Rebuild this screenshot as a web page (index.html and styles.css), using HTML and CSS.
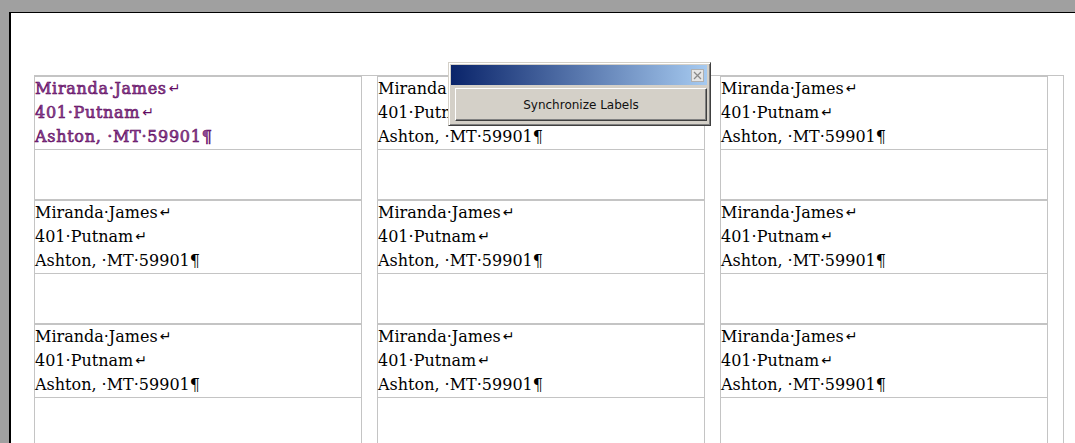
FILE: index.html
```html
<!DOCTYPE html>
<html lang="en">
<head>
<meta charset="utf-8">
<title>Labels</title>
<link rel="stylesheet" href="styles.css">
</head>
<body>
<div class="page">
  <div class="table">
    <div class="row">
      <div class="label">
        <div class="text fancy">
          <div class="line">Miranda·James<span class="ret">↵</span></div>
          <div class="line">401·Putnam<span class="ret">↵</span></div>
          <div class="line">Ashton, ·MT·59901¶</div>
        </div>
        <div class="empty"></div>
      </div>
      <div class="gap"></div>
      <div class="label">
        <div class="text">
          <div class="line">Miranda·James<span class="ret">↵</span></div>
          <div class="line">401·Putnam<span class="ret">↵</span></div>
          <div class="line">Ashton, ·MT·59901¶</div>
        </div>
        <div class="empty"></div>
      </div>
      <div class="gap"></div>
      <div class="label">
        <div class="text">
          <div class="line">Miranda·James<span class="ret">↵</span></div>
          <div class="line">401·Putnam<span class="ret">↵</span></div>
          <div class="line">Ashton, ·MT·59901¶</div>
        </div>
        <div class="empty"></div>
      </div>
      <div class="gap last"></div>
    </div>
    <div class="row">
      <div class="label">
        <div class="text">
          <div class="line">Miranda·James<span class="ret">↵</span></div>
          <div class="line">401·Putnam<span class="ret">↵</span></div>
          <div class="line">Ashton, ·MT·59901¶</div>
        </div>
        <div class="empty"></div>
      </div>
      <div class="gap"></div>
      <div class="label">
        <div class="text">
          <div class="line">Miranda·James<span class="ret">↵</span></div>
          <div class="line">401·Putnam<span class="ret">↵</span></div>
          <div class="line">Ashton, ·MT·59901¶</div>
        </div>
        <div class="empty"></div>
      </div>
      <div class="gap"></div>
      <div class="label">
        <div class="text">
          <div class="line">Miranda·James<span class="ret">↵</span></div>
          <div class="line">401·Putnam<span class="ret">↵</span></div>
          <div class="line">Ashton, ·MT·59901¶</div>
        </div>
        <div class="empty"></div>
      </div>
      <div class="gap last"></div>
    </div>
    <div class="row">
      <div class="label">
        <div class="text">
          <div class="line">Miranda·James<span class="ret">↵</span></div>
          <div class="line">401·Putnam<span class="ret">↵</span></div>
          <div class="line">Ashton, ·MT·59901¶</div>
        </div>
        <div class="empty"></div>
      </div>
      <div class="gap"></div>
      <div class="label">
        <div class="text">
          <div class="line">Miranda·James<span class="ret">↵</span></div>
          <div class="line">401·Putnam<span class="ret">↵</span></div>
          <div class="line">Ashton, ·MT·59901¶</div>
        </div>
        <div class="empty"></div>
      </div>
      <div class="gap"></div>
      <div class="label">
        <div class="text">
          <div class="line">Miranda·James<span class="ret">↵</span></div>
          <div class="line">401·Putnam<span class="ret">↵</span></div>
          <div class="line">Ashton, ·MT·59901¶</div>
        </div>
        <div class="empty"></div>
      </div>
      <div class="gap last"></div>
    </div>
  </div>
</div>

<div class="toolbar">
  <div class="titlebar">
    <div class="close">
      <svg width="9" height="9" viewBox="0 0 9 9"><path d="M1 1 L8 8 M8 1 L1 8" stroke="#8a8a8a" stroke-width="1.3" fill="none"/></svg>
    </div>
  </div>
  <div class="btn">Synchronize Labels</div>
</div>
</body>
</html>
```
FILE: styles.css
```css
html, body {
  margin: 0;
  padding: 0;
}
body {
  background: #a0a0a0;
  width: 1075px;
  height: 443px;
  overflow: hidden;
  position: relative;
  padding-top: 12px;
  box-sizing: border-box;
}
.page {
  margin-left: 9px;
  width: 1055px;
  height: 460px;
  background: #fff;
  border-left: 2px solid #000;
  border-top: 1px solid #000;
  box-shadow: 4px 1px 0 #000;
  padding-top: 62px;
  padding-left: 23px;
  box-sizing: content-box;
}
.table {
  width: 1030px;
  border-top: 1px solid #c4c4c4;
}
.row {
  display: flex;
}
.label {
  width: 328px;
  box-sizing: border-box;
  border: 1px solid #c4c4c4;
  display: flex;
  flex-direction: column;
}
.gap {
  width: 15px;
}
.gap.last {
  width: 16px;
  box-sizing: border-box;
  border-right: 1px solid #c4c4c4;
}
.text {
  height: 72px;
  border-bottom: 1px solid #c4c4c4;
  font-family: "DejaVu Serif", serif;
  font-size: 16px;
  line-height: 24px;
  color: #000;
  white-space: nowrap;
}
.line {
  height: 24px;
}
.empty {
  height: 49px;
}
.ret {
  font-family: "DejaVu Sans", sans-serif;
  font-size: 14px;
  line-height: 0;
  margin-left: 2px;
  vertical-align: 1px;
}
.fancy {
  color: #8e4a94;
  -webkit-text-stroke: 0.6px #620a62;
  letter-spacing: 0.7px;
}
.fancy .ret {
  -webkit-text-stroke: 0;
  color: #620a62;
}

.toolbar {
  position: absolute;
  left: 448px;
  top: 62px;
  width: 263px;
  height: 64px;
  box-sizing: border-box;
  background: #d4d0c8;
  border-top: 1px solid #d4d0c8;
  border-left: 1px solid #d4d0c8;
  border-right: 1px solid #404040;
  border-bottom: 1px solid #404040;
  box-shadow: inset 1px 1px 0 #fff, inset -1px -1px 0 #808080;
  padding: 2px 3px 4px 2px;
  display: flex;
  flex-direction: column;
  gap: 3px;
}
.titlebar {
  height: 20px;
  background: linear-gradient(to right, #0a246a, #a6caf0);
  display: flex;
  justify-content: flex-end;
  align-items: center;
  padding-right: 3px;
}
.close {
  width: 13px;
  height: 13px;
  box-sizing: border-box;
  background: #e6e6e6;
  border: 1px solid #b0b0b0;
  display: flex;
  align-items: center;
  justify-content: center;
}
.close svg {
  display: block;
}
.btn {
  margin-left: 4px;
  height: 33px;
  box-sizing: border-box;
  background: #d4d0c8;
  border-top: 1px solid #fff;
  border-left: 1px solid #fff;
  border-right: 1px solid #404040;
  border-bottom: 1px solid #404040;
  box-shadow: inset -1px -1px 0 #808080;
  font-family: "DejaVu Sans", sans-serif;
  font-size: 12px;
  color: #111;
  display: flex;
  align-items: center;
  justify-content: center;
}
```
